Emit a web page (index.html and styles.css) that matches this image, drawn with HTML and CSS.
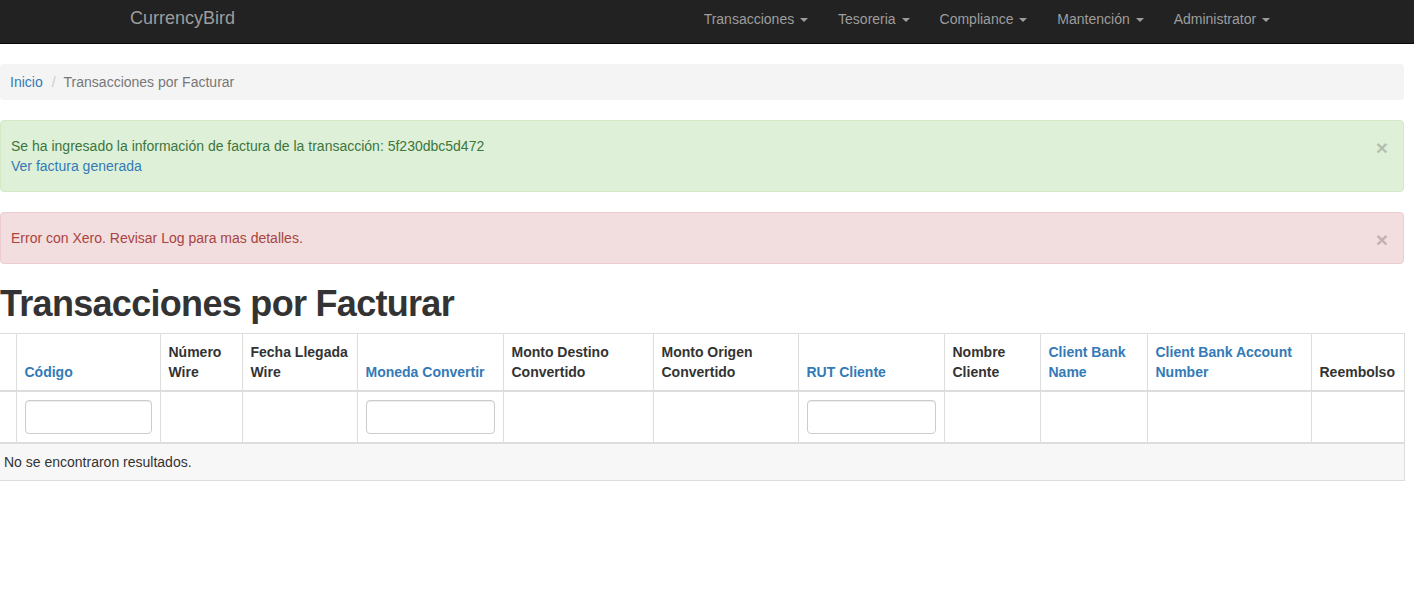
FILE: index.html
```html
<!DOCTYPE html>
<html lang="es">
<head>
<meta charset="utf-8">
<title>Transacciones por Facturar</title>
<link rel="stylesheet" href="styles.css">
</head>
<body>
<nav class="navbar">
  <div class="navbar-inner">
    <a class="brand" href="#">CurrencyBird</a>
    <ul class="nav">
      <li><a href="#">Transacciones <span class="caret"></span></a></li>
      <li><a href="#">Tesoreria <span class="caret"></span></a></li>
      <li><a href="#">Compliance <span class="caret"></span></a></li>
      <li><a href="#">Mantención <span class="caret"></span></a></li>
      <li><a href="#">Administrator <span class="caret"></span></a></li>
    </ul>
  </div>
</nav>
<main class="page">
  <ol class="breadcrumb">
    <li><a href="#">Inicio</a></li>
    <li class="active">Transacciones por Facturar</li>
  </ol>

  <div class="alert alert-success">
    <button class="close" type="button">×</button>
    Se ha ingresado la información de factura de la transacción: 5f230dbc5d472<br>
    <a href="#">Ver factura generada</a>
  </div>

  <div class="alert alert-danger">
    <button class="close" type="button">×</button>
    Error con Xero. Revisar Log para mas detalles.
  </div>

  <h1 class="title">Transacciones por Facturar</h1>

  <table class="grid">
    <colgroup>
      <col class="w16"><col class="w144"><col class="w82"><col class="w115"><col class="w146"><col class="w150"><col class="w145"><col class="w146"><col class="w96"><col class="w107"><col class="w164"><col class="w93">
    </colgroup>
    <thead>
      <tr class="head-row">
        <th></th>
        <th><a href="#">Código</a></th>
        <th>Número Wire</th>
        <th>Fecha Llegada Wire</th>
        <th><a href="#">Moneda Convertir</a></th>
        <th>Monto Destino Convertido</th>
        <th>Monto Origen Convertido</th>
        <th><a href="#">RUT Cliente</a></th>
        <th>Nombre Cliente</th>
        <th><a href="#">Client Bank Name</a></th>
        <th><a href="#">Client Bank Account Number</a></th>
        <th>Reembolso</th>
      </tr>
      <tr class="filter-row">
        <td></td>
        <td><input class="form-control" type="text"></td>
        <td></td>
        <td></td>
        <td><input class="form-control" type="text"></td>
        <td></td>
        <td></td>
        <td><input class="form-control" type="text"></td>
        <td></td>
        <td></td>
        <td></td>
        <td></td>
      </tr>
    </thead>
    <tbody>
      <tr class="empty-row">
        <td colspan="12"><div class="empty">No se encontraron resultados.</div></td>
      </tr>
    </tbody>
  </table>
</main>
</body>
</html>
```

FILE: styles.css
```css
* { box-sizing: border-box; }
html, body { margin: 0; padding: 0; }
body {
  font-family: "Liberation Sans", Arial, Helvetica, sans-serif;
  font-size: 14px;
  line-height: 20px;
  color: #333;
  background: #fff;
}
a { color: #337ab7; text-decoration: none; }

.navbar {
  background: #222;
  border-bottom: 1px solid #080808;
  height: 44px;
  margin-bottom: 20px;
}
.navbar-inner {
  width: 1170px;
  margin-left: 115px;
  display: flex;
  justify-content: space-between;
}
.brand {
  display: block;
  font-size: 18px;
  line-height: 20px;
  padding: 8px 15px;
  color: #9d9d9d;
}
.nav {
  display: flex;
  list-style: none;
  margin: 0;
  padding: 0;
}
.nav a {
  display: block;
  padding: 9px 15px;
  line-height: 20px;
  color: #9d9d9d;
}
.caret {
  display: inline-block;
  width: 0;
  height: 0;
  margin-left: 2px;
  vertical-align: middle;
  border-top: 4px solid;
  border-right: 4px solid transparent;
  border-left: 4px solid transparent;
}

.page { width: 1404px; }

.breadcrumb {
  list-style: none;
  margin: 0 0 20px;
  padding: 8px 10px;
  background: #f4f4f4;
  border-radius: 4px;
  display: flex;
}
.breadcrumb li + li::before {
  content: "/";
  padding: 0 8px 0 9px;
  color: #ccc;
}
.breadcrumb .active { color: #777; }

.alert {
  padding: 15px 35px 15px 10px;
  margin-bottom: 20px;
  border: 1px solid transparent;
  border-radius: 4px;
}
.alert-success { background: #dff0d8; border-color: #d6e9c6; color: #3c763d; }
.alert-danger { background: #f2dede; border-color: #ebccd1; color: #a94442; }
.close {
  float: right;
  position: relative;
  top: 1px;
  right: -20px;
  padding: 0;
  border: 0;
  background: transparent;
  font-family: "Liberation Sans", Arial, sans-serif;
  font-size: 21px;
  font-weight: bold;
  line-height: 1;
  color: #000;
  opacity: .2;
  cursor: pointer;
}

.title {
  font-size: 36px;
  font-weight: bold;
  line-height: 39px;
  margin: 20px 0 10px;
  color: #333;
  letter-spacing: -0.7px;
}

.grid {
  width: 1404px;
  table-layout: fixed;
  border-collapse: collapse;
  border-spacing: 0;
}
.w16 { width: 16px; } .w144 { width: 144px; } .w82 { width: 82px; } .w115 { width: 115px; }
.w146 { width: 146px; } .w150 { width: 150px; } .w145 { width: 145px; } .w96 { width: 96px; }
.w107 { width: 107px; } .w164 { width: 164px; } .w93 { width: 93px; }

.grid th, .grid td {
  border: 1px solid #ddd;
  padding: 8px;
  line-height: 20px;
  text-align: left;
}
.grid th:first-child, .grid td:first-child { border-left: 0; }
.grid th {
  vertical-align: bottom;
  font-weight: bold;
  border-bottom-width: 2px;
}
.filter-row td {
  vertical-align: top;
  border-bottom-width: 2px;
  height: 52px;
}
.form-control {
  display: block;
  width: 100%;
  height: 34px;
  padding: 6px 12px;
  font: inherit;
  color: #555;
  background: #fff;
  border: 1px solid #ccc;
  border-radius: 4px;
  box-shadow: inset 0 1px 1px rgba(0,0,0,.075);
}
.empty-row td {
  background: #f7f7f7;
  padding: 8px 4px;
  border-top: 0;
}
```
